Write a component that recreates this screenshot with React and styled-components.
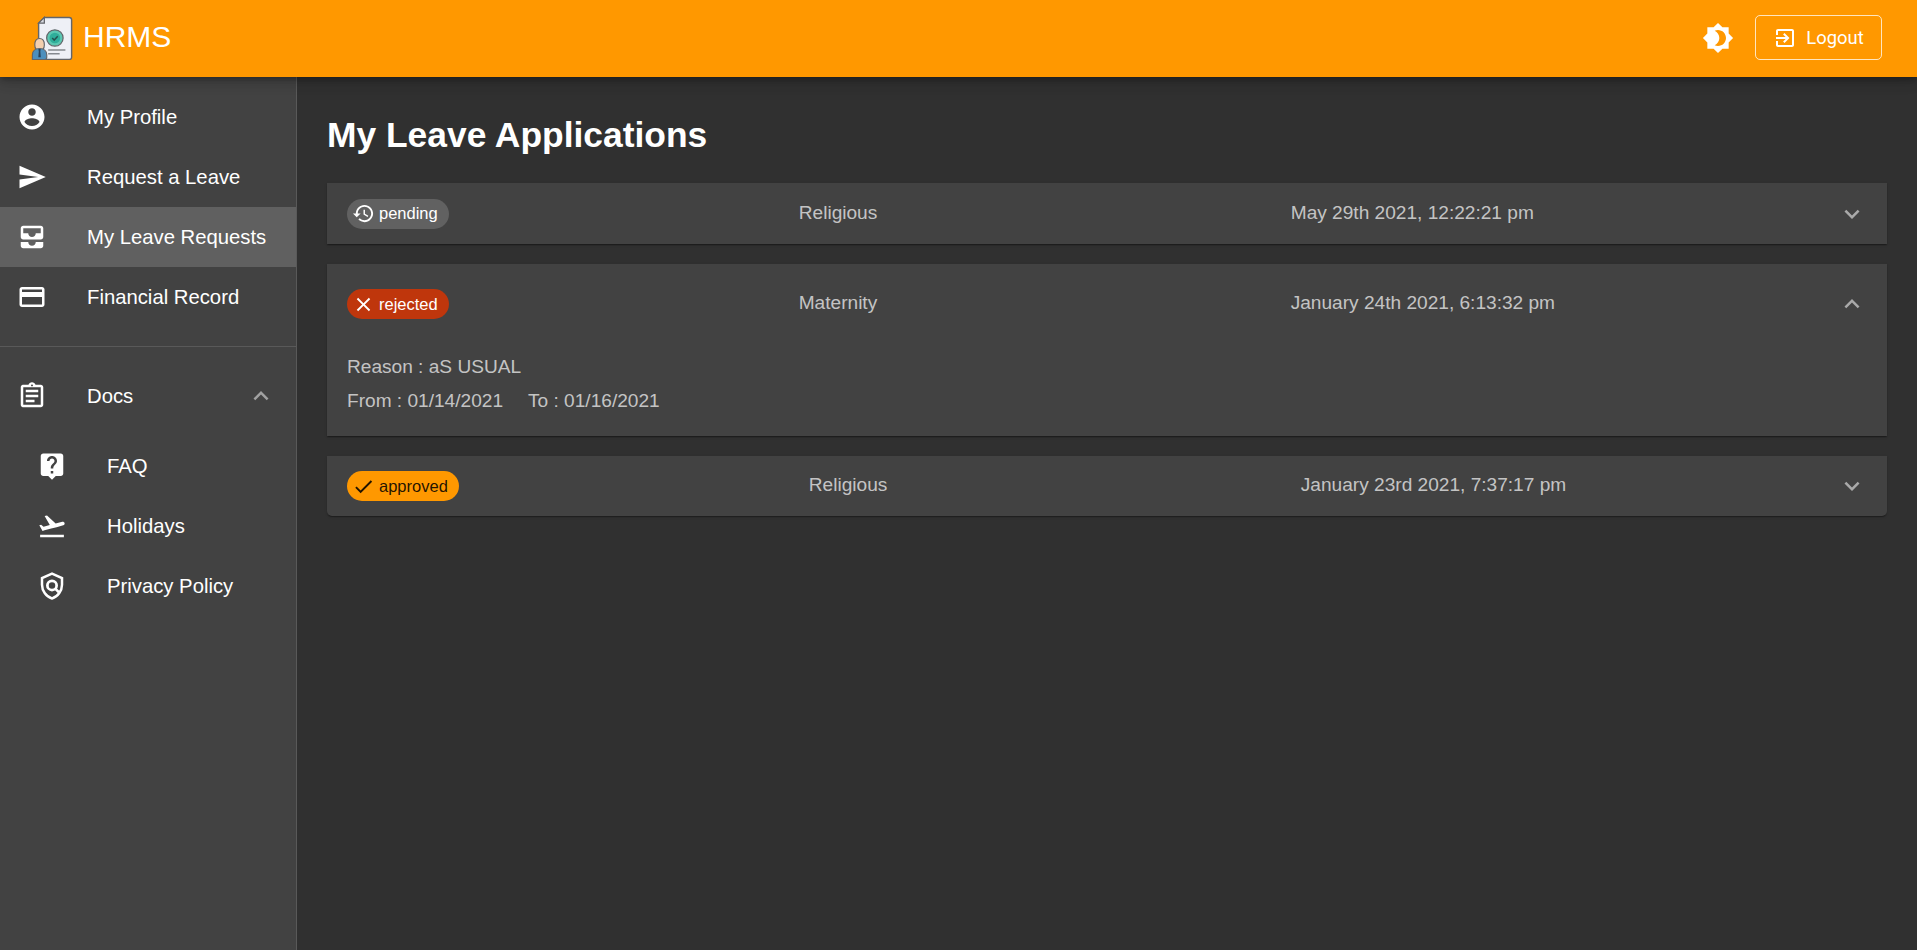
import React from 'react';
import styled, { createGlobalStyle } from 'styled-components';

const Global = createGlobalStyle`
  html, body { margin: 0; padding: 0; background: #303030; }
  body { font-family: "Liberation Sans", Arial, sans-serif; overflow: hidden; }
  * { box-sizing: border-box; }
`;

const P = {
  profile: 'M12 2C6.48 2 2 6.48 2 12s4.48 10 10 10 10-4.48 10-10S17.52 2 12 2zm0 3c1.66 0 3 1.34 3 3s-1.34 3-3 3-3-1.34-3-3 1.34-3 3-3zm0 14.2c-2.5 0-4.71-1.28-6-3.22.03-1.99 4-3.08 6-3.08 1.99 0 5.97 1.09 6 3.08-1.29 1.94-3.5 3.22-6 3.22z',
  send: 'M2.01 21L23 12 2.01 3 2 10l15 2-15 2z',
  inbox: 'M19 3H5c-1.1 0-2 .9-2 2v7c0 1.1.9 2 2 2h14c1.1 0 2-.9 2-2V5c0-1.1-.9-2-2-2zm0 6h-4c0 1.62-1.38 3-3 3s-3-1.38-3-3H5V5h14v4zm-4 7h6v3c0 1.1-.9 2-2 2H5c-1.1 0-2-.9-2-2v-3h6c0 1.66 1.34 3 3 3s3-1.34 3-3z',
  card: 'M20 4H4c-1.11 0-1.99.89-1.99 2L2 18c0 1.11.89 2 2 2h16c1.11 0 2-.89 2-2V6c0-1.11-.89-2-2-2zm0 14H4v-6h16v6zm0-10H4V6h16v2z',
  docs: 'M7 15h7v2H7zm0-4h10v2H7zm0-4h10v2H7zm12-4h-4.18C14.4 1.84 13.3 1 12 1c-1.3 0-2.4.84-2.82 2H5c-.14 0-.27.01-.4.04-.39.08-.74.28-1.01.55-.18.18-.33.4-.43.64-.1.23-.16.49-.16.77v14c0 .27.06.54.16.78s.25.45.43.64c.27.27.62.47 1.01.55.13.02.26.03.4.03h14c1.1 0 2-.9 2-2V5c0-1.1-.9-2-2-2zm-7-.25c.41 0 .75.34.75.75s-.34.75-.75.75-.75-.34-.75-.75.34-.75.75-.75zM19 19H5V5h14v14z',
  faq: 'M19 2H5c-1.11 0-2 .9-2 2v14c0 1.1.89 2 2 2h4l3 3 3-3h4c1.1 0 2-.9 2-2V4c0-1.1-.9-2-2-2zm-6 16h-2v-2h2v2zm2.07-7.75l-.9.92C13.45 11.9 13 12.5 13 14h-2v-.5c0-1.1.45-2.1 1.17-2.83l1.24-1.26c.37-.36.59-.86.59-1.41 0-1.1-.9-2-2-2s-2 .9-2 2H8c0-2.21 1.79-4 4-4s4 1.79 4 4c0 .88-.36 1.68-.93 2.25z',
  flight: 'M2.5 19h19v2h-19zm19.57-9.36c-.21-.8-1.04-1.28-1.84-1.06L14.92 10l-6.9-6.43-1.93.51 4.14 7.17-4.97 1.33-1.97-1.54-1.45.39 1.82 3.16.77 1.33 1.6-.43 5.31-1.42 4.35-1.16L21 11.49c.81-.23 1.28-1.05 1.07-1.85z',
  brightness: 'M20 8.69V4h-4.69L12 .69 8.69 4H4v4.69L.69 12 4 15.31V20h4.69L12 23.31 15.31 20H20v-4.69L23.31 12 20 8.69zM12 18c-.89 0-1.74-.2-2.5-.55C11.56 16.5 13 14.42 13 12s-1.44-4.5-3.5-5.45C10.26 6.2 11.11 6 12 6c3.31 0 6 2.69 6 6s-2.69 6-6 6z',
  exit: 'M10.09 15.59L11.5 17l5-5-5-5-1.41 1.41L12.67 11H3v2h9.67l-2.58 2.59zM19 3H5c-1.11 0-2 .9-2 2v4h2V5h14v14H5v-4H3v4c0 1.1.89 2 2 2h14c1.1 0 2-.9 2-2V5c0-1.1-.9-2-2-2z',
  history: 'M13 3c-4.97 0-9 4.03-9 9H1l3.89 3.89.07.14L9 12H6c0-3.87 3.13-7 7-7s7 3.13 7 7-3.13 7-7 7c-1.93 0-3.68-.79-4.94-2.06l-1.42 1.42C8.27 19.99 10.51 21 13 21c4.97 0 9-4.03 9-9s-4.03-9-9-9zm-1 5v5l4.28 2.54.72-1.21-3.5-2.08V8H12z',
  close: 'M19 6.41L17.59 5 12 10.59 6.41 5 5 6.41 10.59 12 5 17.59 6.41 19 12 13.41 17.59 19 19 17.59 13.41 12z',
  check: 'M9 16.17L4.83 12l-1.42 1.41L9 19 21 7l-1.41-1.41z',
  more: 'M16.59 8.59L12 13.17 7.41 8.59 6 10l6 6 6-6z',
  less: 'M12 8l-6 6 1.41 1.41L12 10.83l4.59 4.58L18 14z',
};

const Svg = styled.svg`
  display: block;
  flex: none;
  width: ${p => p.$size || 30}px;
  height: ${p => p.$size || 30}px;
  fill: ${p => p.$color || 'currentColor'};
`;

const Icon = ({ d, size, color }) => (
  <Svg viewBox="0 0 24 24" $size={size} $color={color}><path d={d} /></Svg>
);

const PolicyIcon = () => (
  <Svg viewBox="0 0 24 24">
    <path d="M12 2.1L4 5.65V11c0 5 3.4 9.7 8 10.95 4.6-1.25 8-5.95 8-10.95V5.65z" fill="none" stroke="#fff" strokeWidth="2" />
    <circle cx="12" cy="11.5" r="3.7" fill="none" stroke="#fff" strokeWidth="2.2" />
    <path d="M14.6 14.1l3 3" fill="none" stroke="#fff" strokeWidth="2.2" />
  </Svg>
);

const Logo = () => (
  <Svg viewBox="0 0 44 46" $size={44}>
    <path d="M14 1.5h26a2.5 2.5 0 0 1 2.5 2.5v39a2.5 2.5 0 0 1-2.5 2.5H12V34H8V7.5z" fill="#eef0f6" stroke="#63656a" strokeWidth="1.5" />
    <path d="M14 1.5V7.5H8z" fill="#d9dce4" stroke="#63656a" strokeWidth="1.3" />
    <circle cx="25" cy="23" r="8.6" fill="#5cc7b2" stroke="#63656a" strokeWidth="1.3" />
    <circle cx="25" cy="23" r="5.6" fill="#2fae9a" />
    <path d="M22.2 23l2.1 2.2 3.7-4" fill="none" stroke="#24504f" strokeWidth="1.5" />
    <path d="M18 35.5h18M18 39.5h12" stroke="#85898f" strokeWidth="1.4" />
    <path d="M4 30c0-4 2-6.5 5-6.5s5 2.5 5 6.5-2 6-5 6-5-2-5-6z" fill="#f3cfae" stroke="#63656a" strokeWidth="1.2" />
    <path d="M1.5 45.5v-5c0-4 3.2-6.5 7.5-6.5s7.5 2.5 7.5 6.5v3c0 1.2-.8 2-2 2z" fill="#4d8fbd" stroke="#63656a" strokeWidth="1.2" />
    <path d="M7.8 34.5h2.4l-.4 2.5.5 6H7.7l.5-6z" fill="#27415a" />
  </Svg>
);

const Shell = styled.div`
  display: grid;
  grid-template-rows: 77px 1fr;
  height: 950px;
  width: 1917px;
  color: #fff;
`;

const AppBar = styled.header`
  position: relative;
  z-index: 2;
  display: flex;
  align-items: center;
  justify-content: space-between;
  background: #ff9800;
  padding: 0 35px 2px 30px;
  box-shadow: 0 3px 5px -1px rgba(0,0,0,.2), 0 5px 10px rgba(0,0,0,.14), 0 1px 18px rgba(0,0,0,.12);
`;

const Brand = styled.div`
  display: flex;
  align-items: center;
  gap: 9px;
`;

const BrandName = styled.span`
  font-size: 30px;
  line-height: 1;
  padding-bottom: 2px;
`;

const BarActions = styled.div`
  display: flex;
  align-items: center;
  gap: 21px;
`;

const ThemeToggle = styled.button`
  display: flex;
  padding: 0;
  border: 0;
  background: none;
  color: #fff;
`;

const LogoutButton = styled.button`
  display: flex;
  align-items: center;
  justify-content: center;
  gap: 9px;
  width: 127px;
  height: 45px;
  border: 1px solid rgba(255,255,255,.75);
  border-radius: 5px;
  background: none;
  color: #fff;
  font: 400 18.4px Roboto, sans-serif;
`;

const Body = styled.div`
  display: grid;
  grid-template-columns: 297px 1fr;
  min-height: 0;
`;

const Drawer = styled.nav`
  background: #424242;
  border-right: 1px solid rgba(255,255,255,.12);
  padding-top: 10px;
`;

const NavItem = styled.div`
  display: flex;
  align-items: center;
  height: 60px;
  padding-left: ${p => (p.$nested ? 37 : 17)}px;
  background: ${p => (p.$active ? 'rgba(255,255,255,.16)' : 'transparent')};
  font-size: 20.3px;
`;

const NavIcon = styled.span`
  display: flex;
  width: 70px;
  flex: none;
`;

const NavLabel = styled.span`
  flex: 1;
`;

const NavChevron = styled.span`
  display: flex;
  margin-right: 20px;
  color: rgba(255,255,255,.5);
`;

const Divider = styled.hr`
  margin: 19px 0 19px;
  border: 0;
  height: 1px;
  background: rgba(255,255,255,.12);
`;

const SubList = styled.div`
  padding-top: 10px;
`;

const Main = styled.main`
  padding: 36px 30px 0;
  background: #303030;
`;

const Title = styled.h1`
  margin: 0 0 26px;
  font-size: 35.4px;
  line-height: 44px;
  font-weight: 700;
`;

const Cards = styled.div`
  display: flex;
  flex-direction: column;
  gap: 20px;
`;

const Card = styled.section`
  background: #424242;
  color: rgba(255,255,255,.7);
  font-size: 19.1px;
  box-shadow: 0 2px 1px -1px rgba(0,0,0,.2), 0 1px 1px rgba(0,0,0,.14), 0 1px 3px rgba(0,0,0,.12);
  border-radius: ${p => p.$radius || '0'};
`;

const Summary = styled.div`
  display: flex;
  align-items: center;
  height: ${p => p.$height}px;
  padding: 0 20px;
`;

const CHIP = {
  pending: ['#616161', '#fff'],
  rejected: ['#bf360c', '#fff'],
  approved: ['#ff9800', 'rgba(0,0,0,.87)'],
};

const Chip = styled.span`
  display: flex;
  align-items: center;
  height: 30px;
  padding: 0 11px 0 5px;
  margin-right: 350px;
  border-radius: 15px;
  background: ${p => CHIP[p.$kind][0]};
  color: ${p => CHIP[p.$kind][1]};
  font-size: 16.5px;
  gap: 4px;
`;

const Kind = styled.span`
  flex: 0 0 492px;
  padding-bottom: 2px;
`;

const When = styled.span`
  flex: 1;
  padding-bottom: 2px;
`;

const Chevron = styled.span`
  display: flex;
  color: rgba(255,255,255,.55);
`;

const Detail = styled.div`
  padding: 6px 20px 18px;
  line-height: 34px;
`;

const Gap = styled.span`
  display: inline-block;
  width: 25px;
`;

const nav = [
  ['My Profile', P.profile],
  ['Request a Leave', P.send],
  ['My Leave Requests', P.inbox, true],
  ['Financial Record', P.card],
];

const chipIcons = { pending: P.history, rejected: P.close, approved: P.check };

const LeaveCard = ({ kind, type, when, open, radius, height, children }) => (
  <Card $radius={radius}>
    <Summary $height={height}>
      <Chip $kind={kind}>
        <Icon d={chipIcons[kind]} size={23} />
        {kind}
      </Chip>
      <Kind>{type}</Kind>
      <When>{when}</When>
      <Chevron><Icon d={open ? P.less : P.more} /></Chevron>
    </Summary>
    {children}
  </Card>
);

export default function App() {
  return (
    <Shell>
      <Global />
      <AppBar>
        <Brand>
          <Logo />
          <BrandName>HRMS</BrandName>
        </Brand>
        <BarActions>
          <ThemeToggle aria-label="theme"><Icon d={P.brightness} size={32} /></ThemeToggle>
          <LogoutButton><Icon d={P.exit} size={24} />Logout</LogoutButton>
        </BarActions>
      </AppBar>
      <Body>
        <Drawer>
          {nav.map(([label, d, active]) => (
            <NavItem key={label} $active={active}>
              <NavIcon><Icon d={d} /></NavIcon>
              <NavLabel>{label}</NavLabel>
            </NavItem>
          ))}
          <Divider />
          <NavItem>
            <NavIcon><Icon d={P.docs} /></NavIcon>
            <NavLabel>Docs</NavLabel>
            <NavChevron><Icon d={P.less} /></NavChevron>
          </NavItem>
          <SubList>
            <NavItem $nested>
              <NavIcon><Icon d={P.faq} /></NavIcon>
              <NavLabel>FAQ</NavLabel>
            </NavItem>
            <NavItem $nested>
              <NavIcon><Icon d={P.flight} /></NavIcon>
              <NavLabel>Holidays</NavLabel>
            </NavItem>
            <NavItem $nested>
              <NavIcon><PolicyIcon /></NavIcon>
              <NavLabel>Privacy Policy</NavLabel>
            </NavItem>
          </SubList>
        </Drawer>
        <Main>
          <Title>My Leave Applications</Title>
          <Cards>
            <LeaveCard kind="pending" type="Religious" when="May 29th 2021, 12:22:21 pm" height={61} />
            <LeaveCard kind="rejected" type="Maternity" when="January 24th 2021, 6:13:32 pm" height={80} open>
              <Detail>
                <div>Reason : aS USUAL</div>
                <div>From : 01/14/2021<Gap />To : 01/16/2021</div>
              </Detail>
            </LeaveCard>
            <LeaveCard kind="approved" type="Religious" when="January 23rd 2021, 7:37:17 pm" height={60} radius="0 0 5px 5px" />
          </Cards>
        </Main>
      </Body>
    </Shell>
  );
}
